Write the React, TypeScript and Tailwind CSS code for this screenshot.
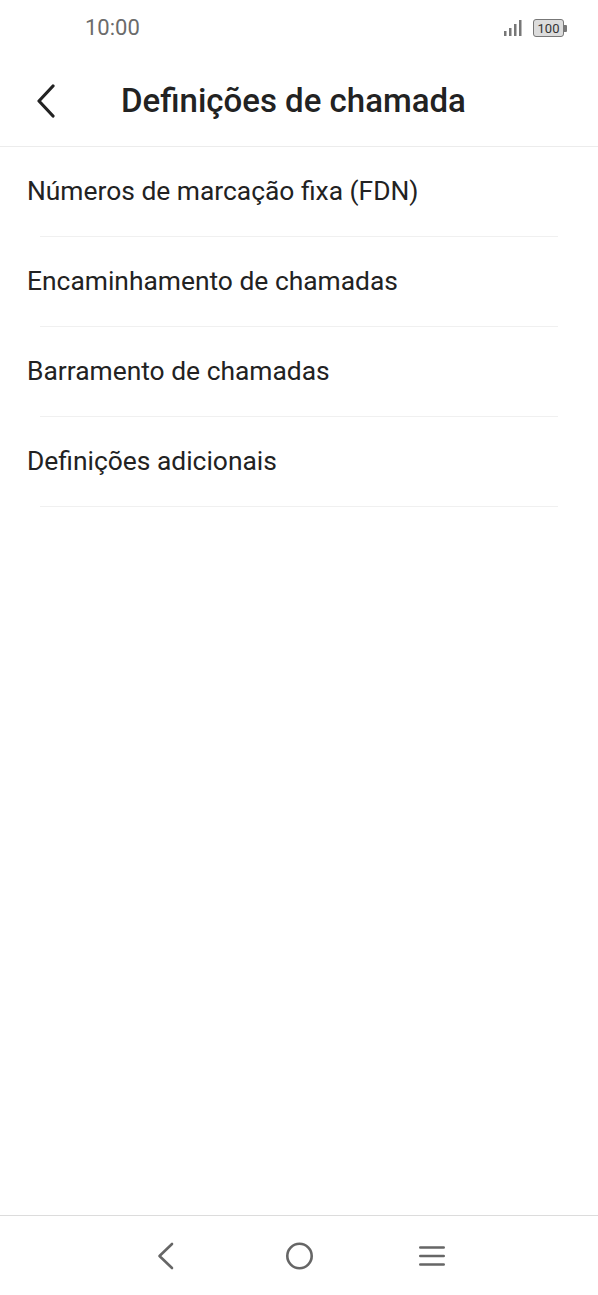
import React from "react";

const items = [
  "Números de marcação fixa (FDN)",
  "Encaminhamento de chamadas",
  "Barramento de chamadas",
  "Definições adicionais",
];

export default function App() {
  return (
    <div
      className="flex h-[1295px] w-[598px] flex-col bg-white"
      style={{ fontFamily: "Roboto, 'Noto Sans', sans-serif" }}
    >
      {/* status bar */}
      <div className="flex h-[56px] items-center justify-between pl-[85px] pr-[31px]">
        <span className="text-[22px] leading-none text-[#6b6b6b]">10:00</span>
        <div className="flex items-center gap-[11px]">
          <svg width="18" height="16" viewBox="0 0 18 16">
            <rect x="0" y="11" width="2.5" height="5" fill="#777" />
            <rect x="5" y="8" width="2.5" height="8" fill="#777" />
            <rect x="10" y="4" width="2.5" height="12" fill="#777" />
            <rect x="15" y="0" width="2.5" height="16" fill="#777" />
          </svg>
          <div className="flex items-center">
            <div className="flex h-[18px] w-[31px] items-center justify-center rounded-[3px] border-[1.5px] border-[#777] bg-[#dcdcdc] text-[13px] leading-none text-[#333]">
              100
            </div>
            <div className="h-[7px] w-[3px] rounded-r-[1px] bg-[#777]" />
          </div>
        </div>
      </div>

      {/* header */}
      <div className="flex h-[91px] items-center border-b border-[#ececec] pb-[1px]">
        <div className="flex w-[121px] pl-[36px]">
          <svg width="20" height="34" viewBox="0 0 20 34">
            <path
              d="M17 2 L3 17 L17 32"
              fill="none"
              stroke="#222"
              strokeWidth="3.2"
              strokeLinecap="round"
              strokeLinejoin="round"
            />
          </svg>
        </div>
        <span className="text-[33px] font-medium leading-none text-[#222]">
          Definições de chamada
        </span>
      </div>

      {/* list */}
      <div className="flex flex-col">
        {items.map((t) => (
          <div key={t} className="flex flex-col">
            <div className="flex h-[89px] items-center pl-[27px]">
              <span className="text-[26.4px] leading-none text-[#222]">{t}</span>
            </div>
            <div className="mx-[40px] h-[1px] bg-[#f0f0f0]" />
          </div>
        ))}
      </div>

      <div className="flex-1" />

      {/* nav bar */}
      <div className="flex h-[80px] items-center border-t-[1.5px] border-[#dcdcdc] pl-[156px]">
        <svg width="18" height="28" viewBox="0 0 18 28">
          <path
            d="M16 2 L3.5 14 L16 26"
            fill="none"
            stroke="#666"
            strokeWidth="2.6"
            strokeLinecap="round"
            strokeLinejoin="round"
          />
        </svg>
        <svg className="ml-[110px]" width="30" height="30" viewBox="0 0 30 30">
          <circle cx="15.5" cy="15" r="12.2" fill="none" stroke="#666" strokeWidth="2.6" />
        </svg>
        <svg className="ml-[104px]" width="28" height="22" viewBox="0 0 28 22">
          <path
            d="M2.3 2.5 H25.7 M2.3 11 H25.7 M2.3 19.5 H25.7"
            stroke="#666"
            strokeWidth="2.6"
            strokeLinecap="round"
          />
        </svg>
      </div>
    </div>
  );
}
